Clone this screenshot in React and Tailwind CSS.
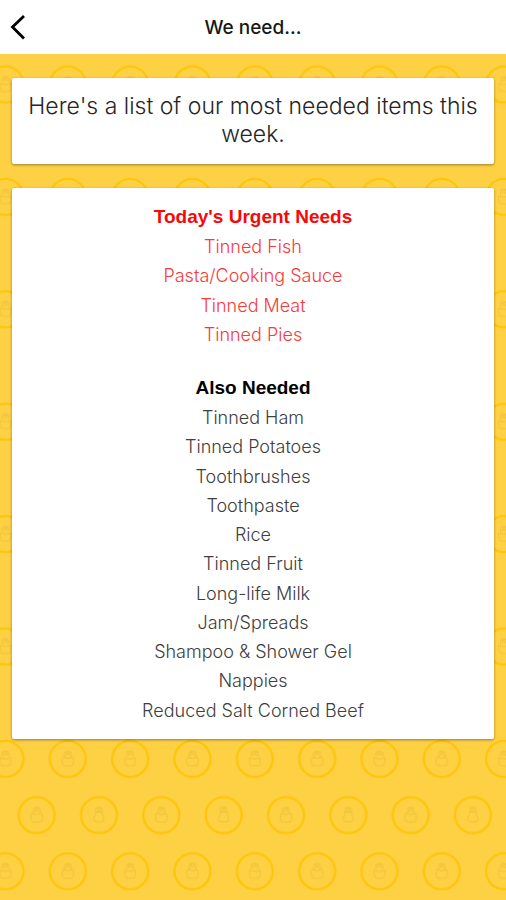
import { useState } from "react"

const urgentItems = ["Tinned Fish", "Pasta/Cooking Sauce", "Tinned Meat", "Tinned Pies"]

const neededItems = [
  "Tinned Ham",
  "Tinned Potatoes",
  "Toothbrushes",
  "Toothpaste",
  "Rice",
  "Tinned Fruit",
  "Long-life Milk",
  "Jam/Spreads",
  "Shampoo & Shower Gel",
  "Nappies",
  "Reduced Salt Corned Beef",
]

const figures = {
  round: "M-4 -2C-7 0 -6 7 -3 7H3C6 7 7 0 4 -2Q0 1 -4 -2Z",
  pot: "M-5.500 -1C-5.500 2 -5 7 -3 7H3C5 7 5.500 2 5.500 -1Q0 1 -5.500 -1Z",
  pear: "M-3 -3C-3 0 -6 2 -5 5Q-4 7 0 7Q4 7 5 5C6 2 3 0 3 -3Z",
}

function Badge({ x, y, shape }) {
  return (
    <g transform={`translate(${x} ${y})`} fill="none">
      <circle r="18" stroke="#fbc60c" strokeWidth="2.4" />
      <g stroke="#efc33b" strokeWidth="1">
        <path d={figures[shape]} />
        <path d="M-3 -2C-4.500 -5 -3 -8 0 -8C3 -8 4.500 -5 3 -2M-2 -7L0 -5L2 -7" />
      </g>
      <g fill="#e8bc3a">
        <circle cx="-1.500" cy="-4" r="0.7" />
        <circle cx="1.500" cy="-4" r="0.7" />
      </g>
    </g>
  )
}

function Backdrop() {
  return (
    <svg className="absolute inset-0 -z-10 h-full w-full" aria-hidden="true">
      <defs>
        <pattern id="badges" x="5.5" y="30.5" width="124.66" height="112.4" patternUnits="userSpaceOnUse">
          <Badge x={0} y={0} shape="pot" />
          <Badge x={0} y={112.4} shape="pot" />
          <Badge x={62.33} y={0} shape="round" />
          <Badge x={62.33} y={112.4} shape="round" />
          <Badge x={124.66} y={0} shape="pot" />
          <Badge x={124.66} y={112.4} shape="pot" />
          <Badge x={31.2} y={56.2} shape="round" />
          <Badge x={93.5} y={56.2} shape="pear" />
        </pattern>
      </defs>
      <rect width="100%" height="100%" fill="#fed144" />
      <rect width="100%" height="100%" fill="url(#badges)" />
    </svg>
  )
}

function Card({ children }) {
  return <section className="rounded-xs bg-white text-center shadow-[0_1px_3px_rgba(0,0,0,0.4)]">{children}</section>
}

function NeedList({ title, items, titleClass, itemClass }) {
  return (
    <div>
      <h2 className={`font-['Liberation_Sans',sans-serif] text-[19px] leading-[30px] font-bold ${titleClass}`}>{title}</h2>
      <ul className={`text-lg leading-relaxed font-light ${itemClass}`}>
        {items.map((item) => (
          <li key={item}>{item}</li>
        ))}
      </ul>
    </div>
  )
}

export default function App() {
  const [open, setOpen] = useState(true)

  return (
    <div className="flex min-h-screen flex-col bg-[#fed144] font-[Inter,sans-serif]">

      {/* Top bar */}
      <header className="grid h-[54px] grid-cols-[1fr_auto_1fr] items-center bg-white px-2 pt-0.5">
        <button type="button" aria-label="Back" onClick={() => setOpen(!open)} className="w-6">
          <svg viewBox="0 0 24 28" className="h-7 w-6" fill="none" stroke="#000" strokeWidth="2.8">
            <path d="M16 2L4.500 13L16 24.500" />
          </svg>
        </button>
        <h1 className="text-[19px] font-medium text-neutral-900">We need...</h1>
      </header>

      <main className="relative isolate flex-1 overflow-hidden">
        <Backdrop />
        {open && (
          <div className="flex flex-col gap-6 px-3 py-6">
            <Card>
              <p className="px-4 pt-3.5 pb-4 text-[23px] leading-7 font-light text-neutral-800">
                Here's a list of our most needed items this week.
              </p>
            </Card>

            <Card>
              <div className="flex flex-col gap-6 px-4 py-3.5">
                <NeedList title="Today's Urgent Needs" items={urgentItems} titleClass="text-[#f80808]" itemClass="text-[#f83a3a]" />
                <NeedList title="Also Needed" items={neededItems} titleClass="text-black" itemClass="text-neutral-700" />
              </div>
            </Card>
          </div>
        )}
      </main>
    </div>
  )
}
